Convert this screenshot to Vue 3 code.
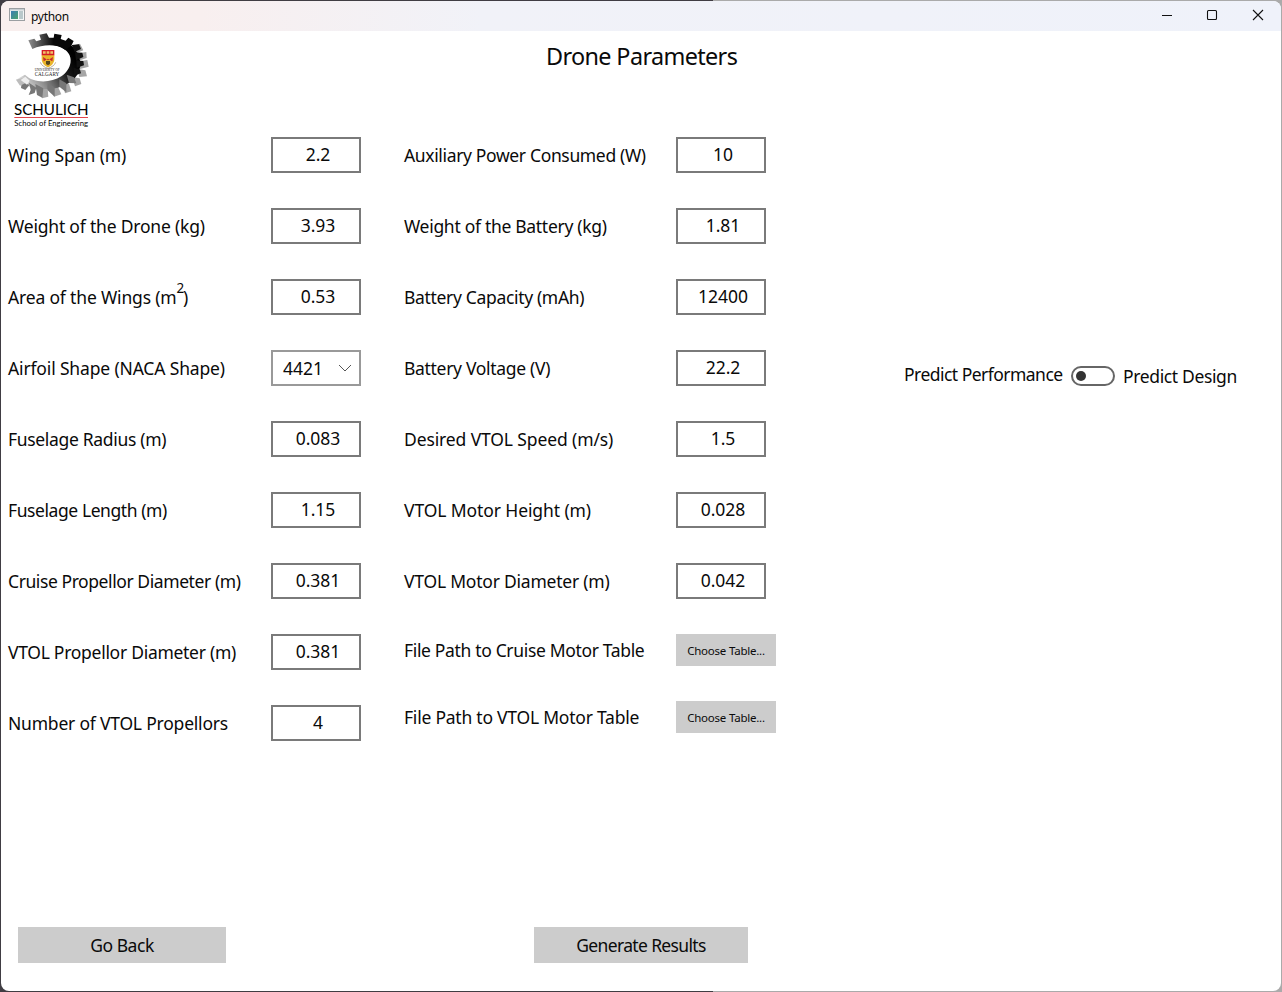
<script setup>
import { ref } from 'vue'

const airframe = ref([
  { label: 'Wing Span (m)', value: '2.2', track: -0.08 },
  { label: 'Weight of the Drone (kg)', value: '3.93', track: -0.2 },
  { label: 'Area of the Wings (m', sup: '2', tail: ')', value: '0.53', track: -0.17 },
  { label: 'Airfoil Shape (NACA Shape)', value: '4421', select: true, track: -0.15 },
  { label: 'Fuselage Radius (m)', value: '0.083', track: -0.32 },
  { label: 'Fuselage Length (m)', value: '1.15', track: -0.42 },
  { label: 'Cruise Propellor Diameter (m)', value: '0.381', track: -0.42 },
  { label: 'VTOL Propellor Diameter (m)', value: '0.381', track: -0.28 },
  { label: 'Number of VTOL Propellors', value: '4', track: -0.21 }
])
const power = ref([
  { label: 'Auxiliary Power Consumed (W)', value: '10', track: -0.35 },
  { label: 'Weight of the Battery (kg)', value: '1.81', track: -0.3 },
  { label: 'Battery Capacity (mAh)', value: '12400', track: -0.33 },
  { label: 'Battery Voltage (V)', value: '22.2', track: -0.31 },
  { label: 'Desired VTOL Speed (m/s)', value: '1.5', track: -0.12 },
  { label: 'VTOL Motor Height (m)', value: '0.028', track: -0.1 },
  { label: 'VTOL Motor Diameter (m)', value: '0.042', track: -0.22 }
])
const files = [
  { label: 'File Path to Cruise Motor Table', track: -0.34 },
  { label: 'File Path to VTOL Motor Table', track: -0.23 }
]
const design = ref(false)
const spacing = (row) => ({ letterSpacing: row.track + 'px' })
</script>

<template>
  <div class="desktop">
    <div class="window">
      <header class="titlebar">
        <svg class="app-icon" width="16" height="14" viewBox="0 0 16 14">
          <defs>
            <linearGradient id="appfill" x1="0" y1="0" x2="1" y2="1">
              <stop offset="0" stop-color="#3b7cb4" />
              <stop offset="1" stop-color="#4ba36b" />
            </linearGradient>
          </defs>
          <rect x=".5" y=".5" width="15" height="12" fill="#f4f6f6" stroke="#9b9fa2" />
          <rect x="1" y="1" width="14" height="1.5" fill="#c8ced2" />
          <rect x="2" y="3" width="7" height="8" fill="url(#appfill)" />
          <rect x="10" y="3" width="4" height="8" fill="#b9c8cb" />
        </svg>
        <span class="app-name">python</span>
        <div class="controls">
          <svg width="12" height="12" viewBox="0 0 12 12"><path d="M2 6.5H12" /></svg>
          <svg width="12" height="12" viewBox="0 0 12 12"><rect x="1.5" y="1.5" width="9" height="9" rx="1" /></svg>
          <svg width="12" height="12" viewBox="0 0 12 12"><path d="M1 1L11 11M11 1L1 11" /></svg>
        </div>
      </header>

      <section class="heading">
        <svg class="logo" width="80" height="100" viewBox="33 96 240 300">
          <defs>
            <linearGradient id="ring" gradientUnits="userSpaceOnUse" x1="60" y1="250" x2="215" y2="160">
              <stop offset="0" stop-color="#e4e4e4" />
              <stop offset=".35" stop-color="#8c8c8c" />
              <stop offset=".75" stop-color="#1a1a1a" />
              <stop offset="1" stop-color="#000" />
            </linearGradient>
            <linearGradient id="toptip" gradientUnits="userSpaceOnUse" x1="88" y1="0" x2="160" y2="0">
              <stop offset="0" stop-color="#8a8a8a" />
              <stop offset="1" stop-color="#080808" />
            </linearGradient>
          </defs>
          <g fill="#a6a6a6">
            <path d="M218 137L240 131L250 151L232 158Z" />
            <path d="M236 160L259 156L260 174L240 181Z" />
            <path d="M238 184L262 180L266 200L240 207Z" />
            <path d="M232 207L256 211L261 229L238 231Z" />
            <path d="M216 231L239 235L244 252L225 259Z" />
            <path d="M186 247L207 251L214 274L195 280Z" />
            <path d="M151 262L174 260L184 283L162 290Z" />
            <path d="M119 267L143 267L145 290L126 295Z" />
          </g>
          <path fill="url(#ring)" d="M110 128C145 111 190 117 218 140C248 170 248 211 222 236C183 276 100 278 48 239L75 224C100 250 151 250 184 229C216 207 222 168 195 149C174 133 145 132 118 137Z" />
          <path fill="url(#toptip)" d="M85 121L103 116L109 124L123 119L118 104L140 100L147 113L161 113L163 101L185 105L182 117L197 122L205 113L221 123L214 137L195 149C171 132 131 132 97 147Z" />
          <g fill="#111">
            <path d="M215 135L237 133L243 147L224 156Z" />
            <path d="M225 157L247 158L250 171L228 181Z" />
            <path d="M229 181L250 183L252 196L230 203Z" />
            <path d="M221 203L240 209L243 220L222 227Z" />
          </g>
          <g fill="#777">
            <path d="M200 224L222 232L229 250L207 249Z" />
            <path d="M178 238L199 250L199 277L178 260Z" />
            <path d="M143 248L164 263L164 290L142 270Z" />
            <path d="M106 252L130 265L127 293L111 285Z" />
            <path d="M87 248L109 263L104 279L86 285L92 270Z" />
            <path d="M66 242L88 255L76 270L63 264Z" />
          </g>
          <path d="M48 239L67 234L77 249L60 257Z" fill="#bcbcbc" />
          <path d="M62 240L76 230L89 242L81 254Z" fill="#efefef" />
          <path d="M125 164H163V176C163 190 154 197 144 202C134 197 125 190 125 176Z" fill="#e9b52b" />
          <path d="M125 150H163V166H125Z" fill="#d51c26" />
          <path d="M129 154H137V161H129ZM140 154H148V161H140ZM151 154H159V161H151Z" fill="#efc46a" />
          <path d="M129 171L144 181L159 171L157 184L144 176L131 184Z" fill="#c8262d" />
          <path d="M138 183H150V192L144 196L138 192Z" fill="#55451c" />
          <path d="M121 187Q126 200 144 205Q162 200 167 187" fill="none" stroke="#b9b0a0" stroke-width="3" />
          <text x="104" y="213" class="uni" font-size="12" textLength="75" lengthAdjust="spacingAndGlyphs">UNIVERSITY OF</text>
          <text x="104" y="227" class="uni" font-size="19" textLength="74" lengthAdjust="spacingAndGlyphs">CALGARY</text>
          <text x="42" y="345" class="school" font-size="44" textLength="224" lengthAdjust="spacingAndGlyphs">SCHULICH</text>
          <path d="M43 352.5H264" stroke="#e2444c" stroke-width="3" />
          <text x="43" y="378" class="school" font-size="25" textLength="221" lengthAdjust="spacingAndGlyphs">School of Engineering</text>
        </svg>
        <h1>Drone Parameters</h1>
      </section>

      <main class="body">
        <div class="column first">
          <div v-for="row in airframe" :key="row.label" class="row">
            <label :style="spacing(row)">{{ row.label }}<sup v-if="row.sup">{{ row.sup }}</sup>{{ row.tail }}</label>
            <div v-if="row.select" class="field select">
              <span>{{ row.value }}</span>
              <svg width="14" height="8" viewBox="0 0 14 8"><path d="M1 1L7 7L13 1" /></svg>
            </div>
            <div v-else class="field">{{ row.value }}</div>
          </div>
        </div>
        <div class="column second">
          <div v-for="row in power" :key="row.label" class="row">
            <label :style="spacing(row)">{{ row.label }}</label>
            <div class="field">{{ row.value }}</div>
          </div>
          <div v-for="row in files" :key="row.label" class="row file">
            <label :style="spacing(row)">{{ row.label }}</label>
            <button class="choose">Choose Table...</button>
          </div>
        </div>
        <div class="mode">
          <span class="left">Predict Performance</span>
          <button class="switch" :class="{ on: design }" @click="design = !design"><i></i></button>
          <span class="right">Predict Design</span>
        </div>
      </main>

      <footer class="actions">
        <button class="back">Go Back</button>
        <button class="generate">Generate Results</button>
      </footer>
    </div>
  </div>
</template>

<style>
body { margin: 0; overflow: hidden; }
</style>

<style scoped>
* { box-sizing: border-box; }
.desktop {
  width: 1282px;
  height: 992px;
  padding: 1px;
  background: linear-gradient(90deg, #403d43 0 713px, #aaa 713px);
  font-family: "Noto Sans", "Open Sans", sans-serif;
  font-size: 17.5px;
  color: #0a0a0a;
}
.window {
  width: 1280px;
  height: 990px;
  display: flex;
  flex-direction: column;
  background: #fff;
  border-radius: 8px;
  overflow: hidden;
}
.titlebar {
  height: 30px;
  flex: none;
  display: flex;
  align-items: center;
  padding: 0 17px 0 8px;
  background: linear-gradient(90deg, #f9efee 0, #f8efef 200px, #f1f2f8 480px, #eff2fa 100%);
}
.app-icon { margin-top: -2px; }
.app-name { font-size: 12px; letter-spacing: -.3px; margin: 0 0 0 6px; }
.controls { margin-left: auto; display: flex; gap: 34px; margin-top: -2px; }
.controls svg { fill: none; stroke: #111; stroke-width: 1.1; }
.heading { height: 106px; flex: none; display: flex; align-items: flex-start; }
.logo { margin: 1px 0 0 10px; overflow: visible; }
.uni { font-family: "Liberation Serif", serif; fill: #222; }
.school { font-family: Lato, sans-serif; fill: #000; }
h1 {
  margin: 8px 0 0 455px;
  font-size: 23.4px;
  line-height: 34px;
  font-weight: 400;
  letter-spacing: -.63px;
  white-space: nowrap;
}
.body { height: 790px; flex: none; display: flex; padding-left: 7px; }
.row { height: 71px; display: flex; align-items: flex-start; }
label { line-height: 36px; white-space: nowrap; }
.first label { width: 263px; }
.second { margin-left: 43px; }
.second label { width: 272px; }
sup { font-size: 13.5px; line-height: 0; vertical-align: 11px; margin-right: -1px; }
.field {
  width: 90px;
  height: 36px;
  border: 2px solid #7a7a7a;
  padding-left: 4px;
  line-height: 31px;
  text-align: center;
}
.select { display: flex; align-items: center; border-color: #999; padding: 0 7px 0 10px; justify-content: space-between; }
.select svg { fill: none; stroke: #555; stroke-width: 1; }
button { border: 0; padding: 0; background: #ccc; color: #0a0a0a; font-family: inherit; font-size: inherit; }
.file { height: 67px; }
.file label { line-height: 32px; }
.choose { width: 100px; height: 32px; font-size: 11.5px; line-height: 32px; padding-top: 1px; letter-spacing: -.22px; }
.mode { height: 44px; margin: 217px 0 0 128px; display: flex; align-items: center; white-space: nowrap; }
.left { width: 167px; margin-top: -4px; letter-spacing: -.53px; }
.right { margin: 0 0 0 8px; letter-spacing: -.36px; }
.switch { width: 44px; height: 20px; border: 2px solid #666; border-radius: 10px; background: #fff; display: flex; align-items: center; padding-left: 3px; }
.switch.on { justify-content: flex-end; padding: 0 3px 0 0; }
.switch i { width: 10px; height: 10px; border-radius: 50%; background: #333; }
.actions { display: flex; padding-left: 17px; }
.actions button { height: 36px; line-height: 36px; }
.actions .back { width: 208px; letter-spacing: -.45px; }
.actions .generate { width: 214px; margin-left: 308px; letter-spacing: -.65px; }
</style>
